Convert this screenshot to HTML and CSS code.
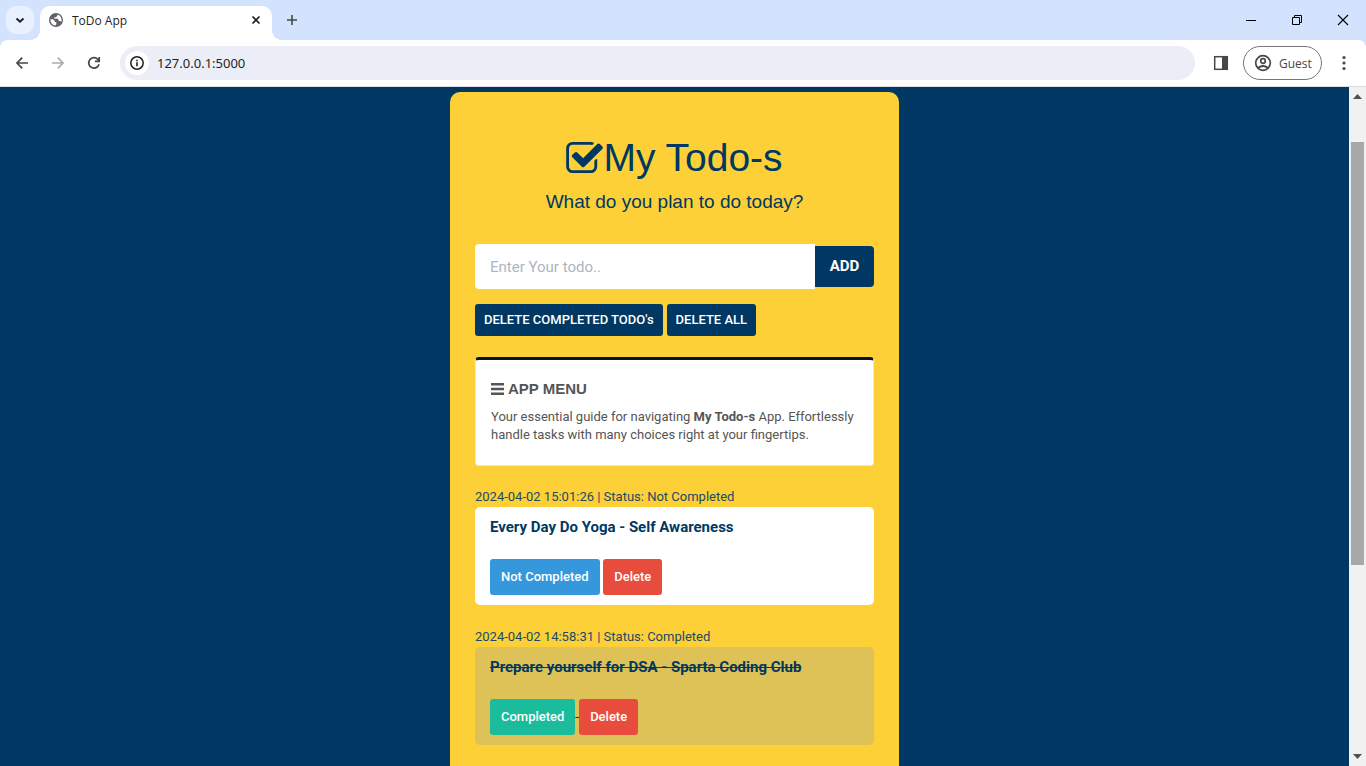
FILE: index.html
```html
<!DOCTYPE html>
<html lang="en">
<head>
<meta charset="utf-8">
<title>ToDo App</title>
<link rel="stylesheet" href="styles.css">
</head>
<body>
<div class="tab-strip">
  <button class="tab-search" aria-label="Search tabs"><svg width="10" height="10" viewBox="0 0 10 10"><path d="M1.5 3.5 5 6.7 8.500 3.500" fill="none" stroke="#1f1f1f" stroke-width="2"/></svg></button>
  <div class="tab">
    <svg class="globe" width="16" height="16" viewBox="0 0 16 16"><circle cx="8" cy="8" r="7" fill="#5f6368"/><path d="M2.400 7.200H5l1.800 1.700v1.200h1.500v2.300l-1 1.200A5.800 5.800 0 0 1 2.400 7.200zM9.400 2.400v1.300L7.900 5.200H6.300v1.600h3.300l1 1.300v1h1.600l1 .9A5.800 5.800 0 0 0 9.400 2.400z" fill="#fff"/></svg>
    <span class="tab-title">ToDo App</span>
    <button class="icon-button" aria-label="Close tab"><svg width="10" height="10" viewBox="0 0 10 10"><path d="m1.500 1.500 7 7m0-7-7 7" stroke="#1f1f1f" stroke-width="1.700"/></svg></button>
  </div>
  <button class="new-tab icon-button" aria-label="New tab"><svg width="12" height="12" viewBox="0 0 12 12"><path d="M6 1v10M1 6h10" stroke="#474747" stroke-width="1.600"/></svg></button>
  <div class="window-controls">
    <button class="icon-button" aria-label="Minimize"><svg width="12" height="12" viewBox="0 0 12 12"><path d="M1 6.500h10" stroke="#000"/></svg></button>
    <button class="icon-button" aria-label="Restore"><svg width="12" height="12" viewBox="0 0 12 12"><path d="M1.500 3.500h7v7h-7zM3.500 3.500v-2h7v7h-2" fill="none" stroke="#000"/></svg></button>
    <button class="icon-button" aria-label="Close"><svg width="12" height="12" viewBox="0 0 12 12"><path d="m1 1 10 10m0-10L1 11" stroke="#000" stroke-width="1.100"/></svg></button>
  </div>
</div>
<div class="toolbar">
  <button class="nav-button" aria-label="Back"><svg width="16" height="16" viewBox="0 0 16 16"><path d="M14 8H3m5.200-5.300L3 8l5.200 5.300" fill="none" stroke="#474747" stroke-width="1.700"/></svg></button>
  <button class="nav-button" aria-label="Forward"><svg width="16" height="16" viewBox="0 0 16 16"><path d="M2 8h11M7.800 2.700 13 8l-5.200 5.300" fill="none" stroke="#adadad" stroke-width="1.700"/></svg></button>
  <button class="nav-button" aria-label="Reload"><svg width="16" height="16" viewBox="0 0 16 16"><path d="M13 9.200A5.200 5.200 0 1 1 11.800 4.400L13 5.600M13.200 2v4.300H8.900" fill="none" stroke="#474747" stroke-width="1.700"/></svg></button>
  <div class="address-bar">
    <button class="site-info" aria-label="Site information"><svg width="16" height="16" viewBox="0 0 16 16"><circle cx="8" cy="8" r="6.200" fill="none" stroke="#1f1f1f" stroke-width="1.500"/><path d="M8 7.300v4M8 4.700v1.500" stroke="#1f1f1f" stroke-width="1.600"/></svg></button>
    <input class="url" aria-label="Address" value="127.0.0.1:5000">
  </div>
  <button class="side-panel icon-button" aria-label="Side panel"><svg width="16" height="16" viewBox="0 0 16 16"><rect x="1.700" y="1.700" width="12.600" height="12.600" fill="none" stroke="#474747" stroke-width="1.500"/><path d="M9 1h6v14H9z" fill="#474747"/></svg></button>
  <button class="profile"><svg width="18" height="18" viewBox="0 0 18 18"><g fill="none" stroke="#474747" stroke-width="1.700"><circle cx="9" cy="9" r="7.300"/><circle cx="9" cy="7" r="2.300"/><path d="M4 14q5-4 10 0"/></g></svg><span>Guest</span></button>
  <button class="more icon-button" aria-label="More"><svg width="4" height="16" viewBox="0 0 4 16"><g fill="#474747"><circle cx="2" cy="2.500" r="1.600"/><circle cx="2" cy="8" r="1.600"/><circle cx="2" cy="13.500" r="1.600"/></g></svg></button>
</div>
<div class="viewport">
  <main class="page">
    <div class="card">
      <h1 class="heading"><svg class="check-icon" width="37" height="31" viewBox="64 128 1664 1408"><path fill="currentColor" d="M1472 930v318q0 119-84.500 203.500t-203.500 84.500h-832q-119 0-203.500-84.500t-84.500-203.500v-832q0-119 84.500-203.500t203.500-84.500h832q63 0 117 25 15 7 18 23 3 17-9 29l-49 49q-10 10-23 10-3 0-9-2-23-6-45-6h-832q-66 0-113 47t-47 113v832q0 66 47 113t113 47h832q66 0 113-47t47-113v-254q0-13 9-22l64-64q10-10 23-10 6 0 12 3 20 8 20 29zm231-489l-814 814q-24 24-57 24t-57-24l-430-430q-24-24-24-57t24-57l110-110q24-24 57-24t57 24l263 263 647-647q24-24 57-24t57 24l110 110q24 24 24 57t-24 57z"/></svg><span>My Todo-s</span></h1>
      <p class="subtitle">What do you plan to do today?</p>
      <form class="add-form">
        <input class="todo-input" type="text" aria-label="New todo" placeholder="Enter Your todo..">
        <button class="add-button" type="button">ADD</button>
      </form>
      <div class="bulk-actions">
        <button class="bulk-button">DELETE COMPLETED TODO's</button>
        <button class="bulk-button">DELETE ALL</button>
      </div>
      <section class="menu">
        <h2 class="menu-title"><svg width="13" height="12" viewBox="0 0 13 12"><path d="M0 1.200h13M0 6h13M0 10.800h13" stroke="currentColor" stroke-width="2.400"/></svg><span>APP MENU</span></h2>
        <p class="menu-text">Your essential guide for navigating <b>My Todo-s</b> App. Effortlessly handle tasks with many choices right at your fingertips.</p>
      </section>
      <ul class="todos">
        <li class="todo">
          <p class="meta">2024-04-02 15:01:26 | Status: Not Completed</p>
          <div class="todo-body">
            <h3 class="todo-title">Every Day Do Yoga - Self Awareness</h3>
            <div class="todo-actions"><button class="action pending">Not Completed</button> <button class="action delete">Delete</button></div>
          </div>
        </li>
        <li class="todo">
          <p class="meta">2024-04-02 14:58:31 | Status: Completed</p>
          <div class="todo-body done">
            <h3 class="todo-title">Prepare yourself for DSA - Sparta Coding Club</h3>
            <div class="todo-actions"><button class="action complete">Completed</button> <button class="action delete">Delete</button></div>
          </div>
        </li>
      </ul>
    </div>
  </main>
  <div class="scrollbar">
    <svg width="9" height="5" viewBox="0 0 9 5"><path d="M0 5 4.500 0 9 5z" fill="#505050"/></svg>
    <div class="track"><div class="thumb"></div></div>
    <svg width="9" height="5" viewBox="0 0 9 5"><path d="M0 0l4.500 5L9 0z" fill="#505050"/></svg>
  </div>
</div>
</body>
</html>
```
FILE: styles.css
```css
* { box-sizing: border-box; }
body {
  margin: 0;
  height: 100vh;
  display: flex;
  flex-direction: column;
  overflow: hidden;
  background: #d3e3fd;
  font-family: Roboto, sans-serif;
  color: #003863;
}
h1, h2, h3, p, ul { margin: 0; padding: 0; }
button, input { font: inherit; border: 0; padding: 0; }
svg { display: block; flex: none; }

.icon-button, .nav-button {
  display: flex;
  align-items: center;
  justify-content: center;
  background: none;
}

/* Browser tabs */
.tab-strip { flex: none; height: 40px; display: flex; align-items: center; padding-left: 6px; }
.tab-search {
  width: 28px;
  height: 28px;
  border-radius: 10px;
  background: #eaf1fe;
  display: flex;
  align-items: center;
  justify-content: center;
}
.tab {
  position: relative;
  align-self: flex-end;
  width: 232px;
  height: 34px;
  margin-left: 6px;
  padding: 0 11px 6px 8px;
  display: flex;
  align-items: center;
  background: #fff;
  border-radius: 10px 10px 0 0;
}
.tab::before, .tab::after {
  content: "";
  position: absolute;
  bottom: 0;
  width: 10px;
  height: 10px;
}
.tab::before { right: 100%; background: radial-gradient(circle at 0 0, transparent 10px, #fff 10px); }
.tab::after { left: 100%; background: radial-gradient(circle at 100% 0, transparent 10px, #fff 10px); }
.tab-title {
  flex: 1;
  margin-left: 8px;
  font: 12px "Open Sans", sans-serif;
  color: #1f1f1f;
}
.new-tab { margin-left: 14px; }
.window-controls { margin-left: auto; display: flex; }
.window-controls .icon-button { width: 46px; height: 40px; }

/* Browser toolbar */
.toolbar {
  flex: none;
  height: 47px;
  display: flex;
  align-items: center;
  padding: 0 14px 0 4px;
  background: #fff;
  border-bottom: 1px solid #dcdcdc;
  border-radius: 8px 8px 0 0;
}
.nav-button { width: 36px; height: 34px; }
.address-bar {
  flex: 1;
  height: 34px;
  margin-left: 8px;
  padding-left: 5px;
  display: flex;
  align-items: center;
  border-radius: 17px;
  background: #ebeef7;
}
.site-info {
  width: 24px;
  height: 24px;
  border-radius: 12px;
  background: #fff;
  display: flex;
  align-items: center;
  justify-content: center;
}
.url {
  flex: 1;
  margin: 0 16px 0 8px;
  background: none;
  font: 13px "Noto Sans", sans-serif;
  color: #1f1f1f;
}
.side-panel { margin: 0 14px 0 18px; }
.profile {
  width: 79px;
  height: 34px;
  padding-left: 10px;
  display: flex;
  align-items: center;
  gap: 7px;
  border: 1px solid #747775;
  border-radius: 17px;
  background: #fff;
  font: 12px "Open Sans", sans-serif;
  color: #474747;
}
.more { margin: 0 6px 0 20px; }

/* Page area */
.viewport { flex: 1; min-height: 0; display: flex; background: #003863; }
.page { flex: 1; padding-top: 5px; overflow: hidden; display: flex; justify-content: center; }
.card {
  width: 449px;
  max-width: 100%;
  padding: 44px 25px 0;
  background: #fcd036;
  border-radius: 10px 10px 0 0;
}
.scrollbar {
  flex: none;
  width: 17px;
  padding: 7px 0;
  display: flex;
  flex-direction: column;
  align-items: center;
  background: #f1f1f1;
}
.track { flex: 1; align-self: stretch; padding: 43px 2px 8px; }
.thumb { height: 70%; background: #a8a8a8; }

.heading {
  display: flex;
  align-items: center;
  justify-content: center;
  font: 39px/44px "Liberation Sans", Arial, sans-serif;
}
.check-icon { margin-bottom: 2px; }
.subtitle {
  margin-top: 10px;
  text-align: center;
  font: 19px/24px "Liberation Sans", Arial, sans-serif;
}
.add-form { margin-top: 30px; display: flex; align-items: center; }
.todo-input {
  flex: 1;
  min-width: 0;
  height: 45px;
  padding: 0 15px;
  border-radius: 4px 0 0 4px;
  background: #fff;
  font-size: 15px;
}
.todo-input::placeholder { color: #acb6c0; opacity: 1; }
.add-button {
  width: 59px;
  height: 41px;
  padding-bottom: 2px;
  border-radius: 0 4px 4px 0;
  background: #003863;
  color: #fff;
  font-size: 15px;
  font-weight: 700;
}
.bulk-actions { margin-top: 15px; display: flex; gap: 4px; }
.bulk-button {
  height: 32px;
  padding: 0 9px 2px;
  border-radius: 3px;
  background: #003863;
  color: #fff;
  font-size: 13px;
  font-weight: 500;
}

.menu {
  margin-top: 21px;
  padding: 18px 15px 21px;
  border: 1px solid #e7eaec;
  border-top: 3px solid #041525;
  border-radius: 4px;
  background: #fff;
  color: #555;
}
.menu-title {
  display: flex;
  align-items: center;
  gap: 4px;
  font: bold 15px/22px "Liberation Sans", Arial, sans-serif;
}
.menu-text { margin-top: 8px; font-size: 13px; line-height: 18px; }

.todos { margin-top: 21px; display: flex; flex-direction: column; gap: 22px; list-style: none; }
.meta { font-size: 13px; line-height: 20px; color: #1c4a68; }
.todo-body { padding: 10px 15px; border-radius: 5px; background: #fff; }
.done { background: #dec258; text-decoration: line-through; }
.todo-title { font-size: 15px; font-weight: 700; line-height: 20px; }
.todo-actions { margin-top: 22px; font-size: 15px; line-height: 36px; }
.action {
  height: 36px;
  padding: 0 11px;
  border-radius: 3px;
  color: #fff;
  font-size: 13px;
  font-weight: 500;
  vertical-align: top;
}
.pending { background: #3598dc; }
.complete { background: #1abc9c; }
.delete { background: #e84c3d; }
```
